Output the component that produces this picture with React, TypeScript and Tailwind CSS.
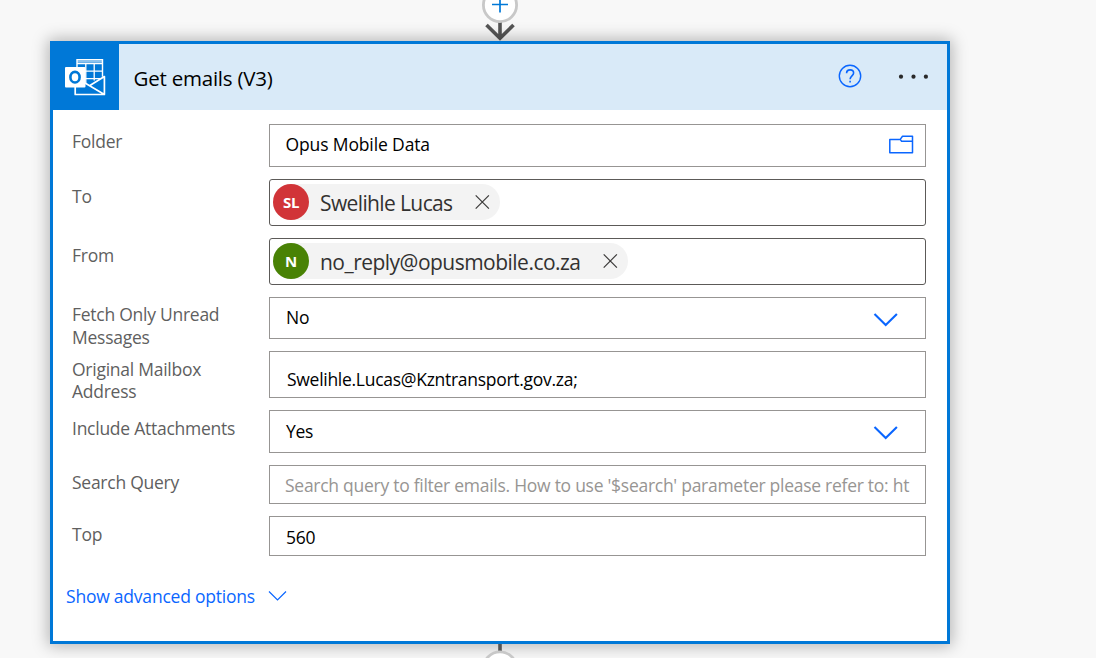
import type { ReactNode } from "react";

function Row({ label, height, labelPad = "pt-[6px]", box, children }: { label: string; height: string; labelPad?: string; box: string; children?: ReactNode }) {
  return (
    <div className={`flex ${height}`}>
      <div className={`w-[197px] shrink-0 pr-8 text-[17.5px] leading-[22.5px] tracking-[-0.26px] text-[#5f5f5f] ${labelPad}`}>{label}</div>
      <div className={`flex w-[657px] shrink-0 border bg-white text-[17.5px] leading-[24px] tracking-[-0.26px] text-black ${box}`}>{children}</div>
    </div>
  );
}

function Chevron() {
  return (
    <svg className="mt-[14px] ml-auto mr-[26px] h-4 w-[26px] shrink-0" viewBox="0 0 26 16" fill="none" stroke="#0a66ff" strokeWidth="2.1">
      <path d="M1.5 2 12.7 13 23.9 2" />
    </svg>
  );
}

function Chip({ initials, name, color, width, tracking }: { initials: string; name: string; color: string; width: string; tracking: string }) {
  return (
    <div className={`mt-1 ml-[3px] flex h-9 items-center rounded-full bg-[#f3f3f3] ${width}`}>
      <div className={`flex h-9 w-9 shrink-0 items-center justify-center rounded-full pb-px text-[15px] font-bold tracking-[-0.3px] text-white ${color}`}>{initials}</div>
      <span className={`ml-[11px] pt-px text-[21px] whitespace-nowrap text-[#323130] ${tracking}`}>{name}</span>
      <svg className="mr-[10px] ml-auto h-4 w-4 shrink-0" viewBox="0 0 16 16" fill="none" stroke="#3b3a39" strokeWidth="1.2">
        <path d="m1.7 1.4 13.2 13.2M14.9 1.4 1.7 14.6" />
      </svg>
    </div>
  );
}

function OutlookIcon() {
  return (
    <svg className="h-[38px] w-[42px]" viewBox="0 0 42 38" fill="none" stroke="white">
      <path d="M13 9V1.8h25.5v17M13 5.6h25.5" strokeWidth="1.4" />
      <path d="M13 3.8h25.5" strokeWidth="2" opacity=".55" />
      <path d="M21.8 5v21M30.2 5v17.5M20 13.2h18.5M20 20.6h16" strokeWidth="1.3" />
      <path d="M11.2 29v7.5h29.2V18.5L25.5 27.8M21 25l19.4 11.5" strokeWidth="1.7" strokeLinejoin="round" />
      <rect x="1" y="9" width="20.5" height="20.5" rx="1" fill="white" stroke="none" />
      <ellipse cx="11" cy="19.2" rx="4.6" ry="5.3" stroke="#0078d7" strokeWidth="2.6" />
    </svg>
  );
}

export default function App() {
  return (
    <div className="flex h-[658px] w-[1096px] flex-col overflow-hidden bg-[#f8f8f8] font-['Open_Sans','Noto_Sans',sans-serif]">
      <div className="flex h-[41px] shrink-0 pl-[480px]">
        <svg className="h-[41px] w-10" viewBox="0 0 40 41" fill="none">
          <path d="M20 22v16M6.5 25 20 38.2 33.5 25" stroke="#555" strokeWidth="3.6" />
          <circle cx="20" cy="5" r="16.6" fill="white" stroke="#c8c8c8" strokeWidth="2.8" />
          <path d="M12 4.5h16M20 -3.5v16" stroke="#0078d7" strokeWidth="1.7" />
        </svg>
      </div>

      <div className="ml-[50px] h-[603px] w-[900px] shrink-0 border-[3px] border-[#0078d7] bg-white shadow-[0_0_15px_2px_rgba(0,0,0,0.28)]">
        <div className="flex h-[66px] items-center bg-[#d9eaf8]">
          <div className="flex h-[66px] w-[66px] items-center justify-center bg-[#0078d7] pr-0.5 pb-px">
            <OutlookIcon />
          </div>
          <h1 className="ml-[14.5px] pt-[2px] text-[20.5px] tracking-[-0.22px] text-black">Get emails (V3)</h1>
          <svg className="mr-[36px] mb-[2px] ml-auto h-6 w-6" viewBox="0 0 24 24" fill="none" stroke="#0a66ff" strokeWidth="1.4">
            <circle cx="12" cy="12" r="10.7" />
            <path d="M8.6 9.3c0-2 1.4-3.4 3.5-3.4s3.5 1.2 3.5 3.1c0 2.8-3.5 3-3.5 6.2M12.1 16.8v1.8" strokeWidth="1.6" />
          </svg>
          <svg className="mr-[17px] mb-px h-2 w-[32px]" viewBox="0 0 32 8" fill="#292929">
            <circle cx="3" cy="3.7" r="2.1" />
            <circle cx="15.5" cy="3.7" r="2.1" />
            <circle cx="27.9" cy="3.7" r="2.1" />
          </svg>
        </div>

        <div className="flex flex-col gap-3 pt-[14px] pl-[19px]">
          <Row label="Folder" height="h-[43px]" box="border-[#979593]">
            <span className="mt-[7px] ml-[15.5px] tracking-[-0.13px]">Opus Mobile Data</span>
            <svg className="mt-[9px] mr-[11px] ml-auto h-5 w-[26px]" viewBox="0 0 26 20" fill="none" stroke="#0a66ff" strokeWidth="1.5" strokeLinejoin="round">
              <path d="M1.8 5.4h10.4l2.3-3.1h10v16.4H1.8ZM12.2 5.4l1.4 1.8h10.9" />
            </svg>
          </Row>
          <Row label="To" height="h-[47px]" box="rounded-[3px] border-[#5c5a58]">
            <Chip initials="SL" name="Swelihle Lucas" color="bg-[#d13438]" width="w-[227px]" tracking="tracking-[-0.62px]" />
          </Row>
          <Row label="From" height="h-[47px]" box="rounded-[3px] border-[#5c5a58]">
            <Chip initials="N" name="no_reply@opusmobile.co.za" color="bg-[#498205]" width="w-[355px]" tracking="tracking-[-0.52px]" />
          </Row>
          <Row label="Fetch Only Unread Messages" height="h-[42px]" box="border-[#979593]">
            <span className="mt-[7px] ml-4">No</span>
            <Chevron />
          </Row>
          <Row label="Original Mailbox Address" height="h-[47px]" labelPad="pt-[6.5px] tracking-[-0.16px]" box="border-[#979593]">
            <span className="mt-[15px] ml-[17px] tracking-[-0.28px]">Swelihle.Lucas@Kzntransport.gov.za;</span>
          </Row>
          <Row label="Include Attachments" height="h-[43px]" labelPad="pt-[7px] whitespace-nowrap" box="border-[#979593]">
            <span className="mt-[8px] ml-4">Yes</span>
            <Chevron />
          </Row>
          <Row label="Search Query" height="h-[39px]" box="border-[#979593]">
            <span className="mt-[7px] ml-[15px] whitespace-nowrap tracking-[-0.27px] text-[#979593]">Search query to filter emails. How to use '$search' parameter please refer to: ht</span>
          </Row>
          <Row label="Top" height="h-[40px]" labelPad="pt-[7px]" box="border-[#979593]">
            <span className="mt-[8px] ml-4">560</span>
          </Row>
        </div>

        <div className="mt-[28px] flex h-6 items-center pl-[13px] text-[17.5px] tracking-[-0.22px] text-[#0a66ff]">
          <span>Show advanced options</span>
          <svg className="ml-[13.5px] h-3 w-[19px]" viewBox="0 0 19 12" fill="none" stroke="#0a66ff" strokeWidth="1.2">
            <path d="M1 1.5 9.5 10 18 1.5" />
          </svg>
        </div>
      </div>

      <div className="flex h-[14px] shrink-0 pl-[480px]">
        <svg className="h-[14px] w-10" viewBox="0 0 40 14" fill="none">
          <path d="M20 0v7" stroke="#555" strokeWidth="3.6" />
          <circle cx="20" cy="24.5" r="16.6" fill="white" stroke="#c8c8c8" strokeWidth="2.8" />
        </svg>
      </div>
    </div>
  );
}
